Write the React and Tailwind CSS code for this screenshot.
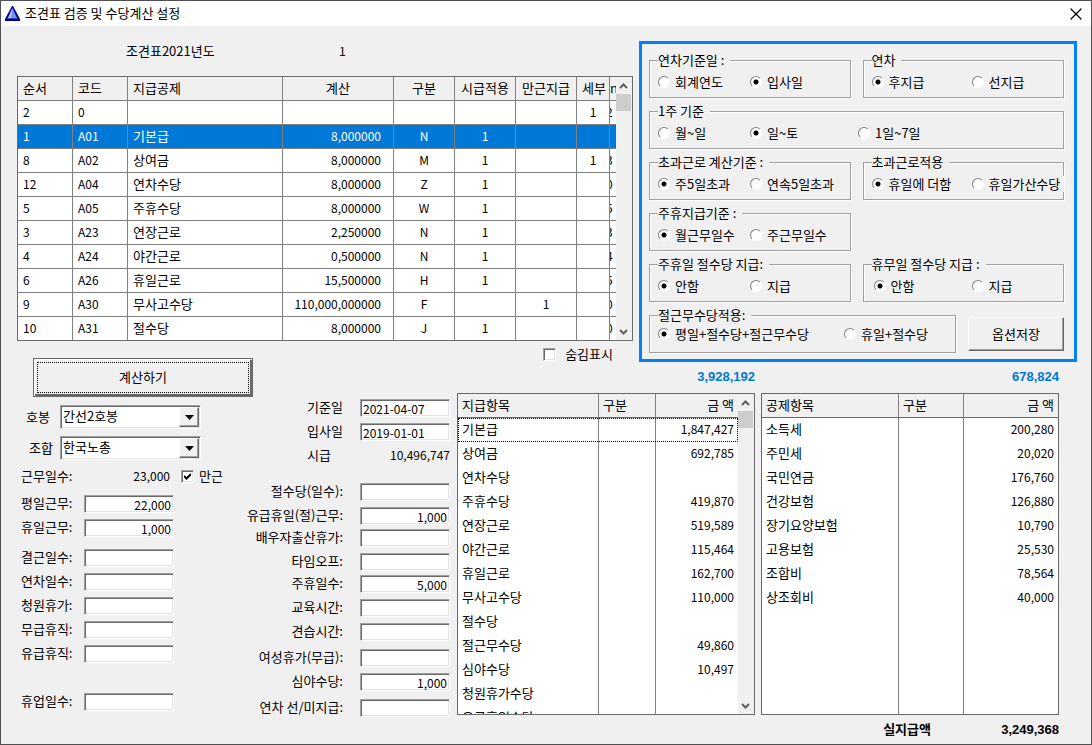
import { useState } from "react";
import { X } from "lucide-react";

const sunken =
    "bg-white border border-t-[#a0a0a0] border-l-[#a0a0a0] border-b-white border-r-white shadow-[inset_1px_1px_0_#696969,inset_-1px_-1px_0_#e3e3e3]";

const rules = [
    { no: "2", code: "0", name: "", calc: "", type: "", hourly: "", full: "", detail: "1", extra: "2" },
    { no: "1", code: "A01", name: "기본급", calc: "8,000000", type: "N", hourly: "1", full: "", detail: "", extra: "" },
    { no: "8", code: "A02", name: "상여금", calc: "8,000000", type: "M", hourly: "1", full: "", detail: "1", extra: "3" },
    { no: "12", code: "A04", name: "연차수당", calc: "8,000000", type: "Z", hourly: "1", full: "", detail: "", extra: "0" },
    { no: "5", code: "A05", name: "주휴수당", calc: "8,000000", type: "W", hourly: "1", full: "", detail: "", extra: "5" },
    { no: "3", code: "A23", name: "연장근로", calc: "2,250000", type: "N", hourly: "1", full: "", detail: "", extra: "3" },
    { no: "4", code: "A24", name: "야간근로", calc: "0,500000", type: "N", hourly: "1", full: "", detail: "", extra: "4" },
    { no: "6", code: "A26", name: "휴일근로", calc: "15,500000", type: "H", hourly: "1", full: "", detail: "", extra: "5" },
    { no: "9", code: "A30", name: "무사고수당", calc: "110,000,000000", type: "F", hourly: "", full: "1", detail: "", extra: "0" },
    { no: "10", code: "A31", name: "절수당", calc: "8,000000", type: "J", hourly: "1", full: "", detail: "", extra: "0" },
];

const payments = [
    ["기본급", "1,847,427"],
    ["상여금", "692,785"],
    ["연차수당", ""],
    ["주휴수당", "419,870"],
    ["연장근로", "519,589"],
    ["야간근로", "115,464"],
    ["휴일근로", "162,700"],
    ["무사고수당", "110,000"],
    ["절수당", ""],
    ["절근무수당", "49,860"],
    ["심야수당", "10,497"],
    ["청원휴가수당", ""],
    ["유급휴일수당", ""],
];

const deductions = [
    ["소득세", "200,280"],
    ["주민세", "20,020"],
    ["국민연금", "176,760"],
    ["건강보험", "126,880"],
    ["장기요양보험", "10,790"],
    ["고용보험", "25,530"],
    ["조합비", "78,564"],
    ["상조회비", "40,000"],
];

function ScrollBar() {
    return (
        <div className="w-4 shrink-0 bg-[#f0f0f0] flex flex-col">
            <svg className="h-[17px] w-[15px] shrink-0" viewBox="0 0 15 17" fill="none" stroke="#606060" strokeWidth="2">
                <path d="M4 11 L7.5 7.5 L11 11" />
            </svg>
            <div className="h-[17px] w-[15px] bg-[#cdcdcd]" />
            <svg className="mt-auto h-[17px] w-[15px] shrink-0" viewBox="0 0 15 17" fill="none" stroke="#606060" strokeWidth="2">
                <path d="M4 7 L7.5 10.5 L11 7" />
            </svg>
        </div>
    );
}

function RuleTable() {
    const [selected, setSelected] = useState(1);
    const cell = "h-6 p-0 px-[5px] pb-[2px] border-b border-r border-[#808080] font-normal whitespace-nowrap";
    const last = "h-6 p-0 pb-[2px] border-b border-[#808080] font-normal overflow-hidden";

    return (
        <div className="mr-[6px] h-[265px] flex border border-[#696969] bg-white overflow-hidden">
            <div className="flex-1 overflow-hidden">
                <table className="w-full table-fixed border-separate border-spacing-0">
                    <colgroup>
                        <col className="w-[55px]" />
                        <col className="w-[55px]" />
                        <col className="w-[155px]" />
                        <col className="w-[111px]" />
                        <col className="w-[61px]" />
                        <col className="w-[61px]" />
                        <col className="w-[61px]" />
                        <col className="w-[33px]" />
                        <col />
                    </colgroup>
                    <thead className="bg-[#f0f0f0]">
                        <tr>
                            <th className={`${cell} text-left`}>순서</th>
                            <th className={`${cell} text-left`}>코드</th>
                            <th className={`${cell} text-left`}>지급공제</th>
                            <th className={cell}>계산</th>
                            <th className={cell}>구분</th>
                            <th className={cell}>시급적용</th>
                            <th className={cell}>만근지급</th>
                            <th className={cell}>세부</th>
                            <th className={`${last} text-left`}>n</th>
                        </tr>
                    </thead>
                    <tbody>
                        {rules.map((r, i) => (
                            <tr
                                key={r.no}
                                onClick={() => setSelected(i)}
                                className={i === selected ? "bg-[#0078d7] text-white" : "bg-white"}
                            >
                                <td className={`${cell} text-xs`}>{r.no}</td>
                                <td className={`${cell} text-xs`}>{r.code}</td>
                                <td className={cell}>{r.name}</td>
                                <td className={`${cell} text-xs text-right pr-3`}>{r.calc}</td>
                                <td className={`${cell} text-xs text-center`}>{r.type}</td>
                                <td className={`${cell} text-xs text-center`}>{r.hourly}</td>
                                <td className={`${cell} text-xs text-center`}>{r.full}</td>
                                <td className={`${cell} text-xs text-center`}>{r.detail}</td>
                                <td className={`${last} text-xs`}>
                                    <span className="-ml-1">{r.extra}</span>
                                </td>
                            </tr>
                        ))}
                    </tbody>
                </table>
            </div>
            <ScrollBar />
        </div>
    );
}

function AmountTable({ title, rows, nameCol, typeCol, scroll }) {
    const head = "h-6 p-0 px-1 pb-[2px] border-b border-[#696969] bg-[#f0f0f0] font-normal";
    const line = "border-r border-r-[#808080]";

    return (
        <div className="h-[322px] flex border border-[#696969] bg-white overflow-hidden">
            <div className="flex-1 overflow-hidden">
                <table className="w-full h-full table-fixed border-separate border-spacing-0">
                    <colgroup>
                        <col className={nameCol} />
                        <col className={typeCol} />
                        <col />
                    </colgroup>
                    <thead>
                        <tr className="h-6">
                            <th className={`${head} ${line} text-left`}>{title}</th>
                            <th className={`${head} ${line} text-left`}>구분</th>
                            <th className={`${head} text-right`}>금 액</th>
                        </tr>
                    </thead>
                    <tbody>
                        {rows.map(([name, amount], i) => (
                            <tr
                                key={name}
                                className={scroll && i === 0 ? "h-6 outline-1 outline-dotted -outline-offset-1 outline-black" : "h-6"}
                            >
                                <td className={`h-6 p-0 px-1 pb-[2px] ${line}`}>{name}</td>
                                <td className={`h-6 p-0 ${line}`}></td>
                                <td className="h-6 p-0 px-1 pb-[2px] text-xs text-right">{amount}</td>
                            </tr>
                        ))}
                        <tr>
                            <td className={`p-0 ${line}`}></td>
                            <td className={`p-0 ${line}`}></td>
                            <td className="p-0"></td>
                        </tr>
                    </tbody>
                </table>
            </div>
            {scroll && <ScrollBar />}
        </div>
    );
}

function RadioGroup({ legend, name, options, checked, columns, className = "pt-[6px] pl-2" }) {
    return (
        <fieldset className="h-[46px] min-w-0 border border-[#a0a0a0] shadow-[1px_1px_0_#fff,inset_1px_1px_0_#fff]">
            <legend className="ml-2 pr-[6px] h-4 leading-4 whitespace-pre bg-[#f0f0f0]">{legend}</legend>
            <div className={`grid ${columns} ${className}`}>
                {options.map((o, i) => (
                    <label key={o} className="flex items-center gap-[5px] h-4 pr-1 justify-self-start whitespace-nowrap bg-[#f0f0f0]">
                        <input
                            type="radio"
                            name={name}
                            defaultChecked={i === checked}
                            className="appearance-none w-3 h-3 shrink-0 rounded-full bg-white border border-t-[#808080] border-l-[#808080] border-b-white border-r-white checked:bg-[radial-gradient(circle,#000_0_2px,#fff_3px)]"
                        />
                        {o}
                    </label>
                ))}
            </div>
        </fieldset>
    );
}

function CheckBox({ label, checked, gap = "gap-[9px]" }) {
    return (
        <label className={`relative flex items-center ${gap}`}>
            <input type="checkbox" defaultChecked={checked} className={`peer appearance-none w-[13px] h-[13px] ${sunken}`} />
            <svg
                className="absolute left-[3px] hidden peer-checked:block w-[7px] h-[7px] pointer-events-none"
                viewBox="0 0 7 7"
                fill="none"
                stroke="#000"
                strokeWidth="2"
            >
                <path d="M0 3 L2.5 5.5 L7 1" />
            </svg>
            {label}
        </label>
    );
}

function Combo({ label, id, value, labelClass }) {
    return (
        <div className="flex items-center h-6 mb-[7px]">
            <label htmlFor={id} className={`w-[43px] ${labelClass}`}>{label}</label>
            <div className="relative w-[141px] h-6">
                <select id={id} className={`appearance-none w-full h-full pl-[2px] pb-[3px] ${sunken}`}>
                    <option>{value}</option>
                </select>
                <span className="absolute right-[2px] top-[2px] w-5 h-5 flex items-center justify-center pointer-events-none bg-[#f0f0f0] border border-t-white border-l-white border-b-[#696969] border-r-[#696969] shadow-[inset_-1px_-1px_0_#a0a0a0]">
                    <svg className="w-[9px] h-[5px]" viewBox="0 0 9 5">
                        <path d="M0 0 H9 L4.5 5 Z" />
                    </svg>
                </span>
            </div>
        </div>
    );
}

// one label + text box line; `height` is the distance to the next line
function Field({ label, id, value = "", height = "h-6", wide, date }) {
    return (
        <div className={`flex items-start ${height}`}>
            <label htmlFor={id} className={wide ? "flex-1 pr-[17px] text-right leading-4 whitespace-nowrap" : "w-[63px] leading-4"}>
                {label}
            </label>
            <input
                id={id}
                type="text"
                defaultValue={value}
                className={`w-[90px] h-[18px] px-[2px] text-xs ${date ? "text-left" : "text-right"} ${sunken}`}
            />
        </div>
    );
}

function AttendanceForm() {
    return (
        <div className="pt-2">
            <Combo label="호봉" id="grade" value="간선2호봉" labelClass="pl-[9px]" />
            <Combo label="조합" id="union" value="한국노총" labelClass="pl-3" />
            <div className="pl-1">
                <div className="flex items-center mt-px mb-[10px] h-[18px]">
                    <span className="w-[63px]">근무일수:</span>
                    <span className="w-[86px] mr-[11px] text-right text-xs">23,000</span>
                    <CheckBox label="만근" checked gap="gap-[5px]" />
                </div>
                <Field label="평일근무:" id="weekday" value="22,000" />
                <Field label="휴일근무:" id="holiday" value="1,000" />
                <div className="mt-[6px] mb-6">
                    <Field label="결근일수:" id="absent" />
                    <Field label="연차일수:" id="annual" />
                    <Field label="청원휴가:" id="petition" />
                    <Field label="무급휴직:" id="unpaid" />
                    <Field label="유급휴직:" id="paid" />
                </div>
                <Field label="휴업일수:" id="closed" />
            </div>
        </div>
    );
}

function AllowanceForm() {
    return (
        <div className="pt-[2px] pr-[7px]">
            <Field wide date label="기준일" id="base-date" value="2021-04-07" />
            <Field wide date label="입사일" id="join-date" value="2019-01-01" />
            <div className="flex items-center h-4 mb-5">
                <span className="ml-[74px]">시급</span>
                <span className="flex-1 text-right text-xs">10,496,747</span>
            </div>
            <Field wide label="절수당(일수):" id="split-days" />
            <Field wide label="유급휴일(절)근무:" id="paid-holiday" value="1,000" height="h-[22px]" />
            <Field wide label="배우자출산휴가:" id="paternity" />
            <Field wide label="타임오프:" id="time-off" height="h-[22px]" />
            <Field wide label="주휴일수:" id="weekly-off" value="5,000" />
            <Field wide label="교육시간:" id="education" />
            <Field wide label="견습시간:" id="training" height="h-[26px]" />
            <Field wide label="여성휴가(무급):" id="women" />
            <Field wide label="심야수당:" id="night" value="1,000" height="h-[26px]" />
            <Field wide label="연차 선/미지급:" id="prepaid" height="h-[18px]" />
        </div>
    );
}

function OptionPanel() {
    const row = "grid grid-cols-2 gap-x-3";
    return (
        <section className="col-start-3 row-start-1 row-span-2 mt-[15px] border-3 border-[#0080ff] pt-2 pb-[6px] pl-[7px] pr-[10px] flex flex-col gap-[5px]">
            <div className={row}>
                <RadioGroup legend="연차기준일 :" name="annual-base" options={["회계연도", "입사일"]} checked={1} columns="grid-cols-[92px_1fr]" />
                <RadioGroup legend="연차" name="annual-pay" options={["후지급", "선지급"]} checked={0} columns="grid-cols-[100px_1fr]" />
            </div>
            <RadioGroup legend="1주 기준" name="week" options={["월~일", "일~토", "1일~7일"]} checked={1} columns="grid-cols-[92px_108px_1fr]" />
            <div className={row}>
                <RadioGroup legend="초과근로 계산기준 :" name="over-base" options={["주5일초과", "연속5일초과"]} checked={0} columns="grid-cols-[92px_1fr]" />
                <RadioGroup legend="초과근로적용" name="over-apply" options={["휴일에 더함", "휴일가산수당"]} checked={0} columns="grid-cols-[100px_1fr]" />
            </div>
            <div className={row}>
                <RadioGroup legend="주휴지급기준 :" name="weekly-base" options={["월근무일수", "주근무일수"]} checked={0} columns="grid-cols-[92px_1fr]" />
            </div>
            <div className={row}>
                <RadioGroup legend="주휴일 절수당 지급:" name="weekly-split" options={["안함", "지급"]} checked={0} columns="grid-cols-[92px_1fr]" />
                <RadioGroup legend="휴무일 절수당 지급 :" name="off-split" options={["안함", "지급"]} checked={0} columns="grid-cols-[98px_1fr]" className="pt-[6px] pl-[10px]" />
            </div>
            <div className="grid grid-cols-[1fr_96px] gap-x-3">
                <RadioGroup
                    legend="절근무수당적용:"
                    name="split-apply"
                    options={["평일+절수당+절근무수당", "휴일+절수당"]}
                    checked={0}
                    columns="grid-cols-[186px_1fr]"
                    className="pt-[3px] pl-2"
                />
                <button
                    type="button"
                    className="self-end mb-[2px] h-[34px] border border-t-white border-l-white border-b-[#696969] border-r-[#696969] shadow-[inset_-1px_-1px_0_#a0a0a0]"
                >
                    옵션저장
                </button>
            </div>
        </section>
    );
}

export default function App() {
    return (
        <div className='min-h-screen flex flex-col bg-[#f0f0f0] border border-[#505050] text-black text-[13px] leading-4 font-["Noto_Sans_CJK_KR",sans-serif]'>
            <header className="h-[25px] flex items-center bg-white pl-1 pr-[5px]">
                <svg className="w-[15px] h-[15px] mr-[5px]" viewBox="0 0 15 15">
                    <path d="M7 0 H8 L15 13 V15 H0 V13 Z" fill="#000080" />
                    <path d="M7.5 2 L12 12 H3 Z" fill="#6f8fff" />
                    <path d="M7.5 2 L6 12 H3 Z" fill="#b8ccff" />
                    <path d="M2 12.5 H13" stroke="#3048c0" />
                </svg>
                <h1 className="flex-1 pb-[2px]">조견표 검증 및 수당계산 설정</h1>
                <button type="button" aria-label="닫기">
                    <X size={20} strokeWidth={1.5} />
                </button>
            </header>

            <main className="grid grid-cols-[440px_182px_1fr] grid-rows-[auto_21px_auto] pl-4 pr-[14px]">
                <section className="col-span-2">
                    <div className="flex items-center h-[50px] pl-[109px]">
                        <span className="w-[213px]">조견표2021년도</span>
                        <span className="text-xs">1</span>
                    </div>
                    <RuleTable />
                </section>

                <OptionPanel />

                <div className="col-start-2 row-start-2 flex items-end justify-end pr-[26px]">
                    <CheckBox label="숨김표시" />
                </div>

                <section className="col-start-1 row-start-2 row-span-2 pt-[17px]">
                    <button
                        type="button"
                        className="block ml-4 w-[220px] h-[39px] p-[3px] border border-[#696969] shadow-[inset_1px_1px_0_#fff,inset_-2px_-2px_0_#696969]"
                    >
                        <span className="flex items-center justify-center h-full pb-[2px] border border-dotted border-black">계산하기</span>
                    </button>
                    <div className="grid grid-cols-[216px_1fr]">
                        <AttendanceForm />
                        <AllowanceForm />
                    </div>
                </section>

                <section className="col-start-2 col-span-2 row-start-3 pr-[18px]">
                    <div className='grid grid-cols-2 gap-x-[6px] h-[31px] pb-[2px] items-center text-right font-bold text-[#0078d7] font-["Liberation_Sans",sans-serif]'>
                        <span>3,928,192</span>
                        <span>678,824</span>
                    </div>
                    <div className="grid grid-cols-2 gap-x-[6px]">
                        <AmountTable title="지급항목" rows={payments} nameCol="w-[141px]" typeCol="w-[57px]" scroll />
                        <AmountTable title="공제항목" rows={deductions} nameCol="w-[137px]" typeCol="w-[65px]" />
                    </div>
                    <div className='flex items-center justify-end h-[29px] font-bold font-["Liberation_Sans","Noto_Sans_CJK_KR",sans-serif]'>
                        <span>실지급액</span>
                        <span className="w-32 text-right">3,249,368</span>
                    </div>
                </section>
            </main>
        </div>
    );
}
